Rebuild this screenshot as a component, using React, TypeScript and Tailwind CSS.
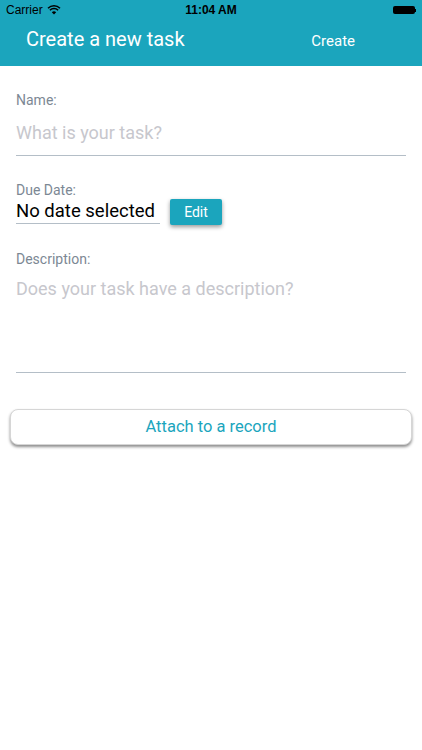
export default function App() {
  return (
    <div className="min-h-[750px] w-[422px] bg-white font-['Roboto','Liberation_Sans',sans-serif]">
      {/* Header */}
      <header className="h-[66px] bg-[#1ba5bd] text-white">
        <div className="flex h-5 items-center justify-between px-[6px] text-[12px] font-['Liberation_Sans',sans-serif] text-black">
          <div className="flex w-[120px] items-center gap-1">
            <span>Carrier</span>
            <svg width="14" height="10" viewBox="0 0 14 10">
              <path d="M7 9.5 L4.8 7.2 A3.2 3.2 0 0 1 9.2 7.2 Z" fill="black" />
              <path d="M2.9 5.3 A5.8 5.8 0 0 1 11.1 5.3" stroke="black" strokeWidth="1.5" fill="none" />
              <path d="M1 3.2 A8.6 8.6 0 0 1 13 3.2" stroke="black" strokeWidth="1.5" fill="none" />
            </svg>
          </div>
          <span className="font-bold">11:04 AM</span>
          <div className="flex w-[120px] justify-end">
            <div className="flex items-center">
              <div className="h-[8px] w-[22px] rounded-[2px] bg-black" />
              <div className="h-[3px] w-[1.5px] bg-black" />
            </div>
          </div>
        </div>
        <div className="flex items-center justify-between pl-[26px] pr-[67px] pt-[6px]">
          <h1 className="text-[20px] leading-6">Create a new task</h1>
          <button className="mt-[4px] text-[15px]">Create</button>
        </div>
      </header>

      <main className="px-4 pt-[26px]">
        {/* Name */}
        <label className="block text-[14px] leading-[16px] text-[#7c8894]">Name:</label>
        <div className="mt-[14px] border-b border-[#b4bec7] pb-[11px] text-[18px] leading-[22px] text-[#c7c7cd]">
          What is your task?
        </div>

        {/* Due date */}
        <label className="mt-[26px] block text-[14px] leading-[16px] text-[#7c8894]">Due Date:</label>
        <div className="mt-[1px] flex items-center gap-[10px]">
          <div className="w-[144px] border-b border-[#b4bec7] pb-[1px] text-[18.5px] leading-[22px] text-black">
            No date selected
          </div>
          <button className="h-[26px] w-[52px] rounded-[2px] bg-[#1ba5bd] text-[14px] text-white shadow-[0_2px_4px_rgba(0,0,0,0.4)]">
            Edit
          </button>
        </div>

        {/* Description */}
        <label className="mt-[26px] block text-[14px] leading-[16px] text-[#7c8894]">Description:</label>
        <div className="mt-[11px] h-[95px] border-b border-[#b4bec7] text-[18px] leading-[22px] text-[#c7c7cd]">
          Does your task have a description?
        </div>
      </main>

      <div className="px-[10px] pt-[36px]">
        <button className="h-[36px] w-full rounded-[8px] border border-[#d6d6d6] bg-white text-[16.5px] text-[#1ba5bd] shadow-[0_2px_3px_rgba(0,0,0,0.45)]">
          Attach to a record
        </button>
      </div>
    </div>
  )
}
